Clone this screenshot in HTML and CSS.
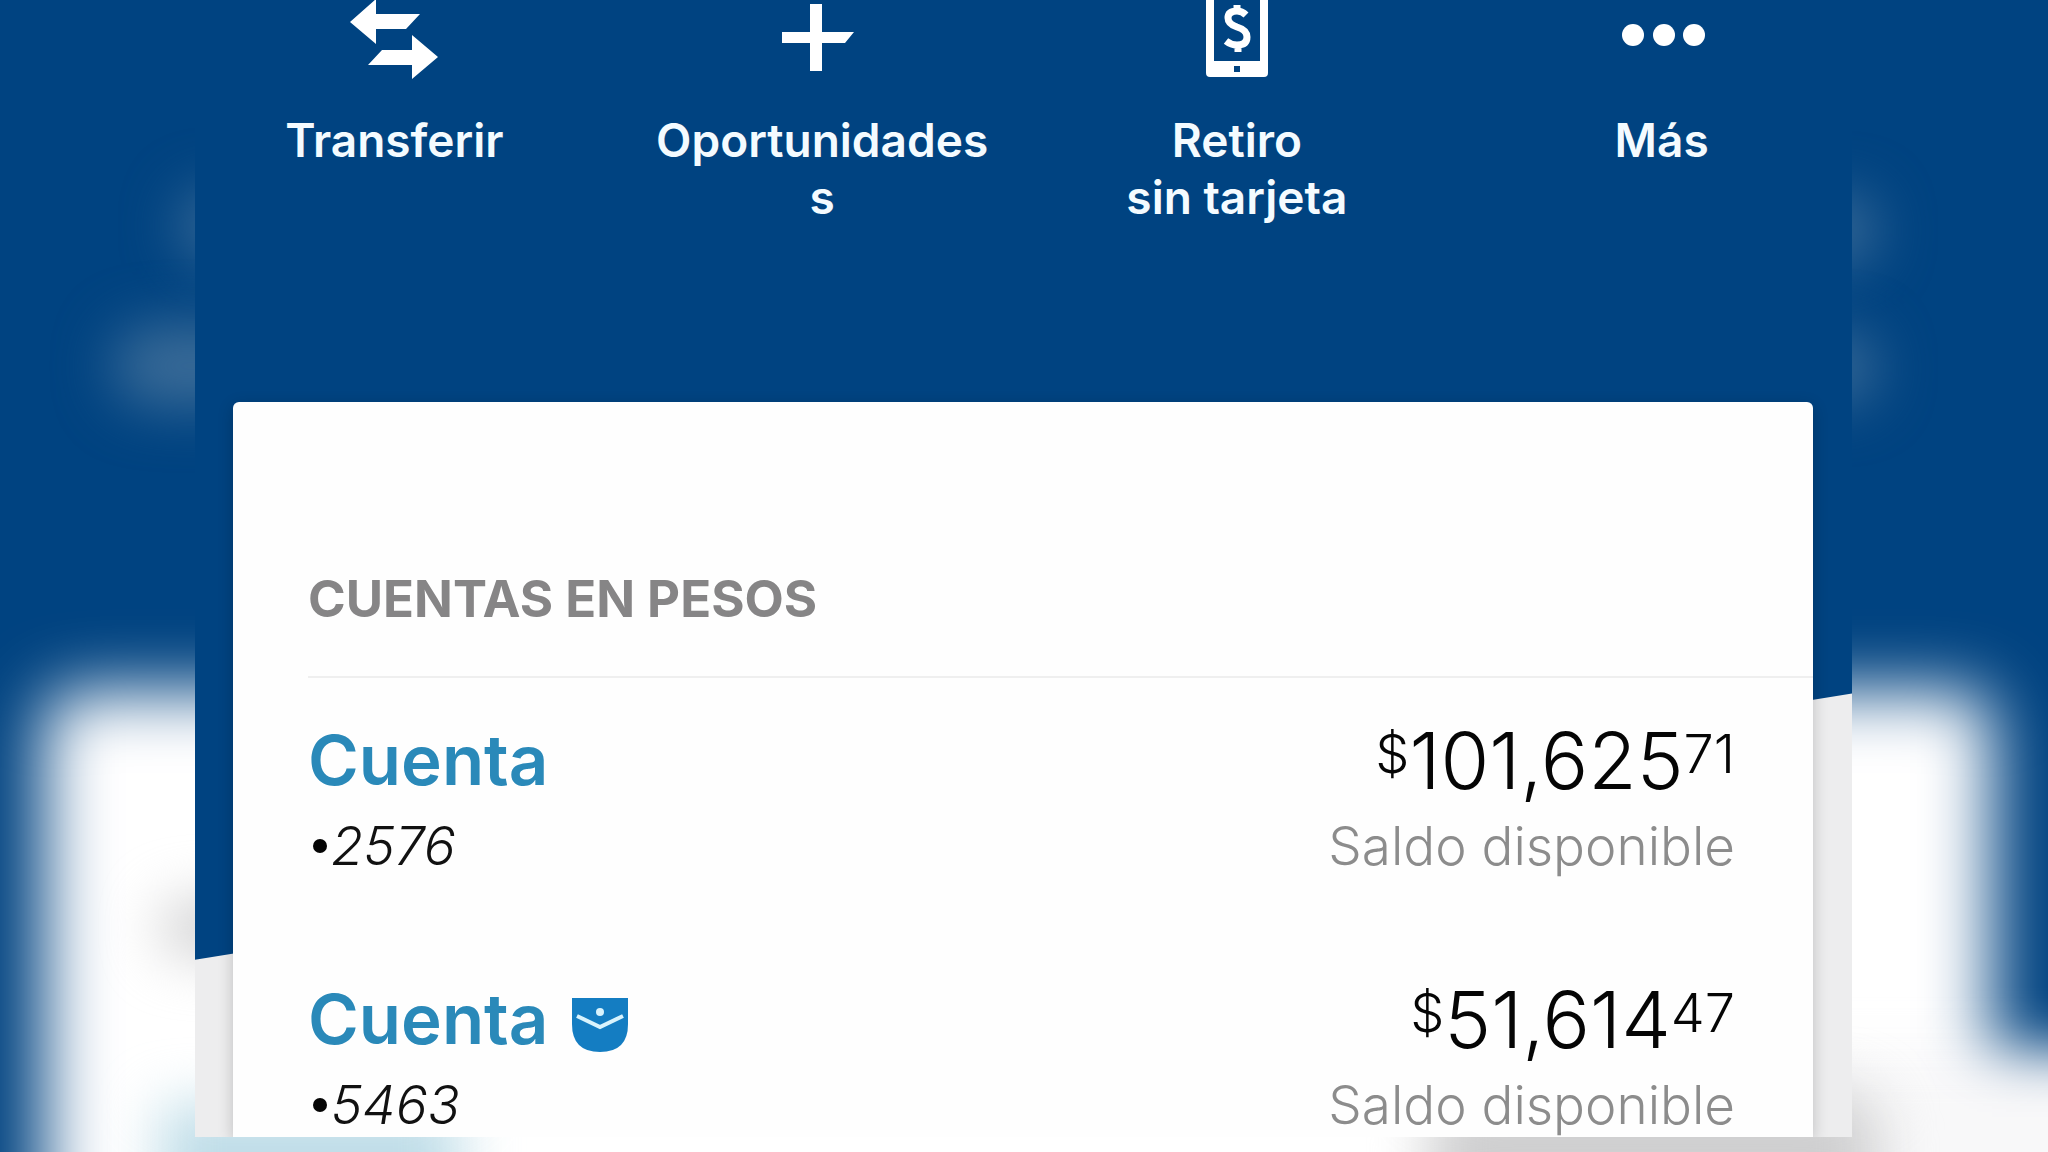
FILE: index.html
```
<!DOCTYPE html>
<html lang="es">
<head>
    <meta charset="UTF-8">
    <meta name="viewport" content="width=device-width, initial-scale=1.0">
    <title>Cuentas en pesos</title>
    <link rel="stylesheet" href="styles.css">
</head>
<body>
    <!-- Blurred backdrop -->
    <div class="backdrop" aria-hidden="true">
        <div class="blur blur-sheet"></div>
        <div class="blur blur-floor"></div>
        <div class="blur glow glow-left-top"></div>
        <div class="blur glow glow-left"></div>
        <div class="blur glow glow-right-top"></div>
        <div class="blur glow glow-right"></div>
        <div class="blur smudge smudge-left"></div>
        <div class="blur smudge smudge-right"></div>
        <div class="blur tint"></div>
    </div>

    <main class="screen">
        <nav class="actions">
            <button type="button" class="action">
                <svg class="action-icon" viewBox="0 0 88 80" width="88" height="80" fill="#fff">
                    <path d="M0 22 26 -1V14H70L56 29H26V44Z"/>
                    <path d="M88 57 62 35V50H32L18 65H62V79Z"/>
                </svg>
                <span>Transferir</span>
            </button>
            <button type="button" class="action">
                <svg class="action-icon" viewBox="0 0 80 80" width="80" height="80" fill="#fff">
                    <path d="M28 4H40V32H72L63 43H40V71H28V43H0V32H28Z"/>
                </svg>
                <span>Oportunidades<br>s</span>
            </button>
            <button type="button" class="action">
                <svg class="action-icon" viewBox="0 0 62 80" width="62" height="80" fill="#fff">
                    <path fill-rule="evenodd" d="M0 -8H62V73Q62 77 58 77H4Q0 77 0 73ZM8 -8V61H54V-8ZM28 66V72H34V66Z"/>
                    <path d="M40 15Q36 11 31 11Q22 11 22 18Q22 24 31 27Q41 30 41 37Q41 45 31 45Q25 45 20 41M31 5V12M32 44V52" fill="none" stroke="#fff" stroke-width="7"/>
                </svg>
                <span>Retiro<br>sin tarjeta</span>
            </button>
            <button type="button" class="action">
                <svg class="action-icon" viewBox="0 0 86 80" width="86" height="80" fill="#fff">
                    <circle cx="14" cy="35" r="11"/>
                    <circle cx="45" cy="35" r="11"/>
                    <circle cx="75" cy="35" r="11"/>
                </svg>
                <span>Más</span>
            </button>
        </nav>

        <section class="card">
            <h2 class="card-title">CUENTAS EN PESOS</h2>
            <ul class="accounts">
                <li class="account">
                    <div>
                        <a href="#" class="account-name">Cuenta</a>
                        <div class="account-number"><span class="dot"></span>2576</div>
                    </div>
                    <div class="balance">
                        <div class="amount"><span class="small">$</span>101,625<span class="small">71</span></div>
                        <div class="balance-label">Saldo disponible</div>
                    </div>
                </li>
                <li class="account">
                    <div>
                        <a href="#" class="account-name">Cuenta
                            <svg class="pocket" viewBox="0 0 56 54" width="56" height="54">
                                <path d="M0 0H56V26Q56 54 28 54Q0 54 0 26Z" fill="#147dc2"/>
                                <path d="M5 18 28 29 51 18" fill="none" stroke="#d8f3fd" stroke-width="4"/>
                                <circle cx="28" cy="14" r="4" fill="#d8f3fd"/>
                            </svg>
                        </a>
                        <div class="account-number"><span class="dot"></span>5463</div>
                    </div>
                    <div class="balance">
                        <div class="amount"><span class="small">$</span>51,614<span class="small">47</span></div>
                        <div class="balance-label">Saldo disponible</div>
                    </div>
                </li>
            </ul>
        </section>
    </main>
</body>
</html>
```

FILE: styles.css
```
* {
    box-sizing: border-box;
}
body {
    margin: 0;
    height: 100vh;
    overflow: hidden;
    background-color: #004381;
    font-family: Inter, "Liberation Sans", sans-serif;
}

/* backdrop */
.backdrop {
    position: fixed;
    inset: 0;
    overflow: hidden;
}
.blur {
    position: absolute;
    filter: blur(28px);
}
.blur-sheet {
    top: 60%;
    left: 44px;
    right: 56px;
    bottom: -120px;
    border-radius: 32px;
    background-color: #fff;
    filter: blur(34px);
}
.blur-floor {
    top: 1050px;
    left: 84%;
    right: -80px;
    bottom: -80px;
    background-color: #f8f8f9;
}
.glow {
    background-color: #3b6c98;
    border-radius: 40px;
}
.glow-left-top {
    top: 190px;
    left: 180px;
    width: 80px;
    height: 72px;
}
.glow-left {
    top: 326px;
    left: 112px;
    width: 160px;
    height: 80px;
}
.glow-right-top {
    top: 194px;
    right: 172px;
    width: 80px;
    height: 72px;
}
.glow-right {
    top: 332px;
    right: 172px;
    width: 80px;
    height: 72px;
}
.smudge {
    background-color: #cfcfd0;
    border-radius: 40px;
}
.smudge-left {
    top: 900px;
    left: 160px;
    width: 120px;
    height: 56px;
}
.smudge-right {
    top: 1090px;
    right: 170px;
    width: 450px;
    height: 160px;
}
.tint {
    top: 1104px;
    left: 160px;
    width: 300px;
    height: 160px;
    background-color: #bfdde8;
}

/* phone screen */
.screen {
    position: relative;
    display: flex;
    flex-direction: column;
    height: calc(100vh - 15px);
    margin: 0 196px 0 195px;
    overflow: hidden;
    background-color: #ededee;
}
.screen::before {
    content: "";
    position: absolute;
    inset: 0;
    background-color: #004381;
    clip-path: polygon(0 0, 100% 0, 100% 61%, 0 84.4%);
}

.actions {
    position: relative;
    display: grid;
    grid-template-columns: 446fr 408fr 420fr 428fr;
    height: 402px;
    margin: 0 -24px;
}
.action {
    display: flex;
    flex-direction: column;
    align-items: center;
    gap: 32px;
    padding: 0;
    border: 0;
    background: none;
    color: #f4fbff;
    font: 600 46px/57px Inter, "Liberation Sans", sans-serif;
    cursor: pointer;
}
.action-icon {
    flex: none;
}

.card {
    position: relative;
    flex: 1;
    min-height: 0;
    margin: 0 39px 0 38px;
    padding: 164px 0 0 75px;
    border-radius: 6px 6px 0 0;
    background-color: #fefefe;
    box-shadow: 0 4px 16px rgba(0, 0, 0, 0.2);
}
.card-title {
    margin: 0;
    padding-bottom: 44px;
    border-bottom: 2px solid #efefef;
    color: #868586;
    font-size: 51px;
    font-weight: 700;
    line-height: 66px;
}
.accounts {
    margin: 0;
    padding: 38px 78px 0 0;
    list-style: none;
}
.account {
    display: flex;
    justify-content: space-between;
    height: 259px;
}
.account-name {
    display: flex;
    align-items: center;
    gap: 24px;
    color: #2a89b9;
    font-size: 69px;
    font-weight: 600;
    line-height: 88px;
    text-decoration: none;
}
.pocket {
    margin-top: 12px;
}
.account-number {
    display: flex;
    align-items: center;
    gap: 4px;
    padding-left: 5px;
    color: #111;
    font-size: 53px;
    font-style: italic;
    font-weight: 300;
    line-height: 84px;
}
.dot {
    width: 14px;
    height: 14px;
    border-radius: 50%;
    background-color: #050505;
}
.balance {
    text-align: right;
}
.amount {
    display: flex;
    justify-content: flex-end;
    color: #050505;
    font-size: 79px;
    font-weight: 300;
    line-height: 88px;
}
.small {
    font-size: 54px;
    line-height: 76px;
}
.balance-label {
    color: #8c8c8c;
    font-size: 53px;
    font-weight: 300;
    line-height: 84px;
}
```
